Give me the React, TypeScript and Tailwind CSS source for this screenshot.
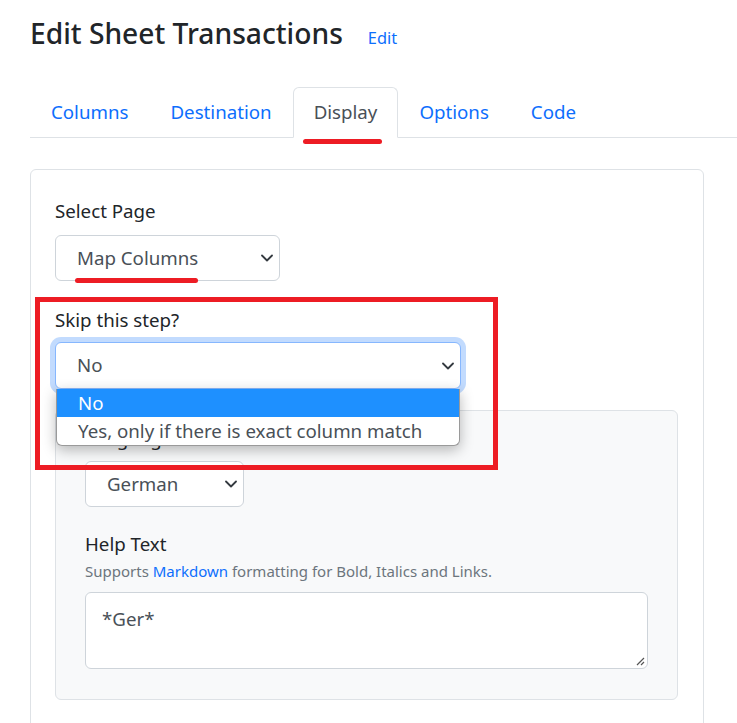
const tabs = ['Columns', 'Destination', 'Display', 'Options', 'Code']

function Chevron() {
  return (
    <svg width="12" height="8" viewBox="0 0 12 8" fill="none" className="shrink-0">
      <path d="M1 1.5l5 5 5-5" stroke="#343a40" strokeWidth="1.8" strokeLinecap="round" strokeLinejoin="round" />
    </svg>
  )
}

function Select({ value, width, focused = false }: { value: string; width: string; focused?: boolean }) {
  return (
    <div
      className={`${width} flex items-center justify-between rounded-[6px] border bg-white pl-[21px] pr-[6px] text-[18.7px] text-[#495057] ${
        focused ? 'h-[47px] border-[#86b7fe] shadow-[0_0_0_5px_rgba(13,110,253,0.25)]' : 'h-[46px] border-[#ced4da]'
      }`}
    >
      <span>{value}</span>
      <Chevron />
    </div>
  )
}

export default function App() {
  return (
    <div className="relative min-h-screen overflow-hidden bg-white font-['Segoe_UI','Noto_Sans',sans-serif] text-[#212529]">
      {/* Header */}
      <div className="flex items-baseline pl-[30px] pt-[15px]">
        <h1 className="text-[28.2px] font-medium leading-[36px]">Edit Sheet Transactions</h1>
        <a className="ml-[25px] text-[16.4px] text-[#0d6efd]">Edit</a>
      </div>

      {/* Tabs */}
      <div className="ml-[30px] mt-[36px] flex border-b border-[#dee2e6]">
        {tabs.map(tab =>
          tab === 'Display' ? (
            <div
              key={tab}
              className="-mb-px flex h-[51px] items-center rounded-t-[6px] border border-[#dee2e6] border-b-white bg-white px-5 text-[18.7px] text-[#495057]"
            >
              {tab}
            </div>
          ) : (
            <div
              key={tab}
              className="-mb-px flex h-[51px] items-center border border-transparent px-5 text-[18.7px] text-[#0d6efd]"
            >
              {tab}
            </div>
          )
        )}
      </div>

      {/* Card */}
      <div className="ml-[30px] mt-[31px] w-[674px] rounded-[6px] border border-[#dee2e6] pb-[80px] pl-[24px] pt-[26px]">
        <label className="block text-[18.7px] leading-[30px]">Select Page</label>
        <div className="mt-[9px]">
          <Select value="Map Columns" width="w-[225px]" />
        </div>

        <label className="mt-[24px] block text-[18.7px] leading-[30px]">Skip this step?</label>
        <div className="relative mt-[7px] w-[406px]">
          <Select value="No" width="w-[406px]" focused />
          {/* open dropdown */}
          <div className="absolute left-px top-[47px] z-20 w-[404px] overflow-hidden rounded-b-[6px] border border-t-0 border-[#9a9a9a] bg-white text-[18.7px] shadow-[0_4px_14px_rgba(0,0,0,0.28)]">
            <div className="flex h-[28px] items-center bg-[#1e90ff] pl-[21px] text-white">No</div>
            <div className="flex h-[28px] items-center pl-[21px] text-[#495057]">
              Yes, only if there is exact column match
            </div>
          </div>
        </div>

        {/* Language panel */}
        <div className="mt-[21px] w-[623px] rounded-[6px] border border-[#dee2e6] bg-[#f8f9fa] pb-[30px] pl-[29px] pt-[13px]">
          <label className="block text-[18.7px] leading-[30px]">Language</label>
          <div className="mt-[7px]">
            <Select value="German" width="w-[159px]" />
          </div>

          <label className="mt-[22px] block text-[18.7px] leading-[30px]">Help Text</label>
          <div className="text-[15px] leading-[24px] text-[#6c757d]">
            Supports <a className="text-[#0d6efd]">Markdown</a> formatting for Bold, Italics and Links.
          </div>
          <div className="relative mt-[9px] h-[77px] w-[563px] rounded-[6px] border border-[#ced4da] bg-white pl-[16px] pt-[11px] text-[18.7px] leading-[30px] text-[#495057]">
            *Ger*
            <svg width="10" height="10" viewBox="0 0 10 10" className="absolute bottom-[2px] right-[2px]">
              <path d="M9 2L2 9M9 6L6 9" stroke="#555" strokeWidth="1.2" />
            </svg>
          </div>
        </div>
      </div>

      {/* Annotations */}
      <div className="pointer-events-none absolute left-[303px] top-[139px] h-[5px] w-[79px] rounded-full bg-[#ed1c24]" />
      <div className="pointer-events-none absolute left-[75px] top-[278px] h-[5px] w-[123px] rounded-full bg-[#ed1c24]" />
      <div className="pointer-events-none absolute left-[35px] top-[297px] z-30 h-[173px] w-[463px] border-[5px] border-[#ed1c24]" />
    </div>
  )
}
